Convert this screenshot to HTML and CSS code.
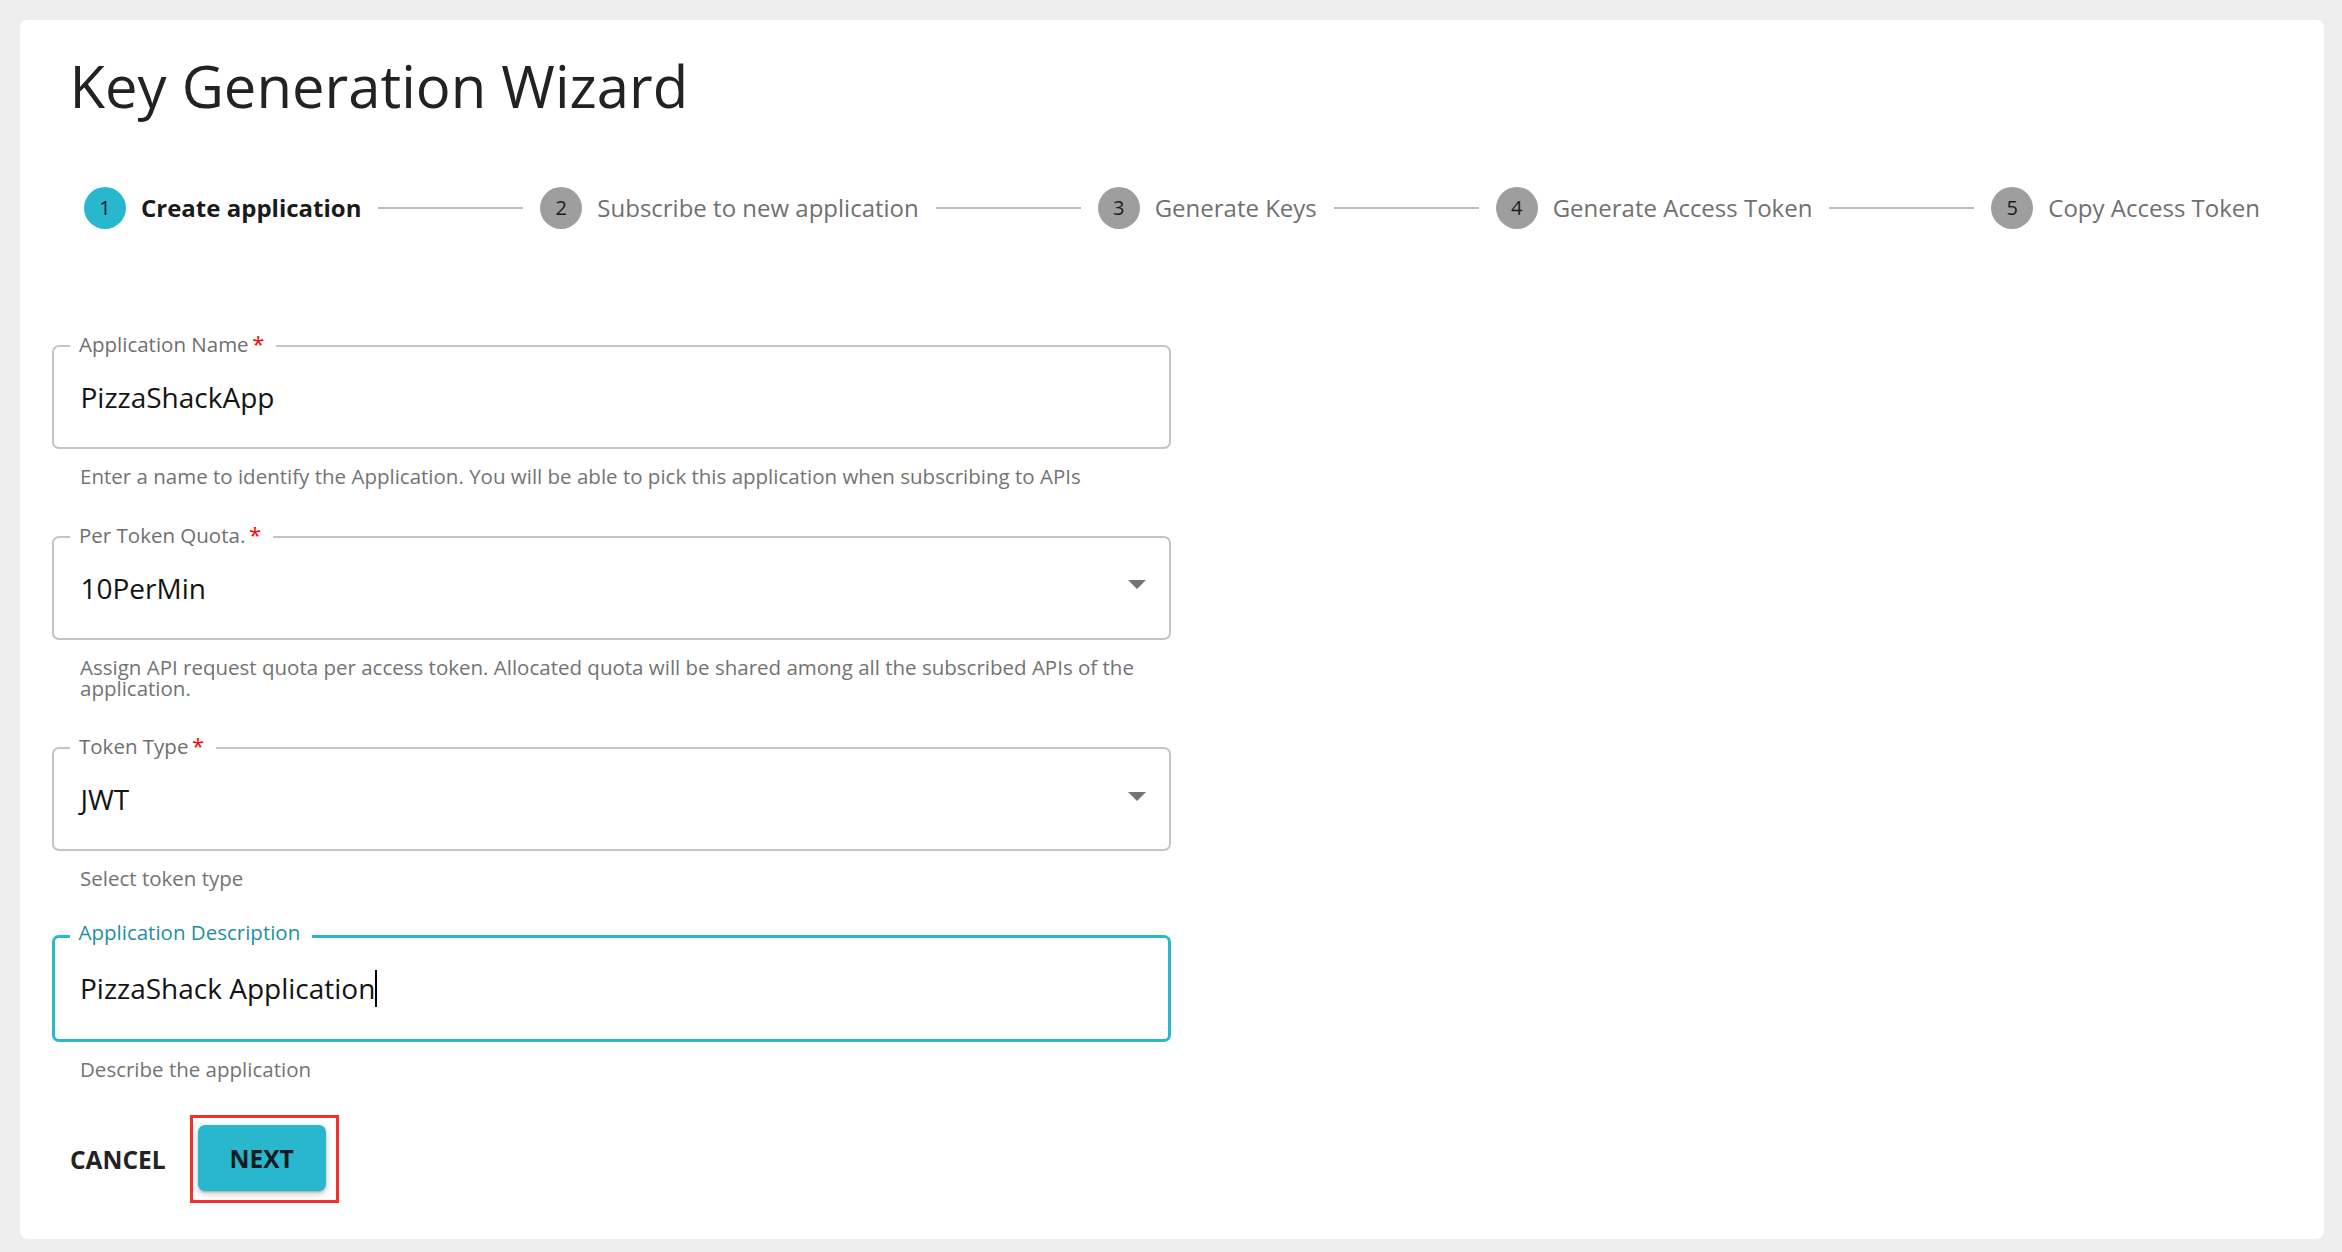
FILE: index.html
```html
<!DOCTYPE html>
<html lang="en">
<head>
<meta charset="utf-8">
<title>Key Generation Wizard</title>
<link rel="stylesheet" href="styles.css">
</head>
<body>
<div class="card">
  <h1 class="title">Key Generation Wizard</h1>
  <div class="stepper">
    <div class="step active"><span class="step-icon">1</span><span class="step-label">Create application</span></div>
    <div class="connector"></div>
    <div class="step"><span class="step-icon">2</span><span class="step-label">Subscribe to new application</span></div>
    <div class="connector"></div>
    <div class="step"><span class="step-icon">3</span><span class="step-label">Generate Keys</span></div>
    <div class="connector"></div>
    <div class="step"><span class="step-icon">4</span><span class="step-label">Generate Access Token</span></div>
    <div class="connector"></div>
    <div class="step"><span class="step-icon">5</span><span class="step-label">Copy Access Token</span></div>
  </div>

  <form class="form">
    <div class="field-group">
      <div class="field">
        <label class="field-label">Application Name<span class="req">&thinsp;*</span></label>
        <span class="field-value">PizzaShackApp</span>
      </div>
      <p class="helper">Enter a name to identify the Application. You will be able to pick this application when subscribing to APIs</p>
    </div>

    <div class="field-group">
      <div class="field select">
        <label class="field-label">Per Token Quota.<span class="req">&thinsp;*</span></label>
        <span class="field-value">10PerMin</span>
        <span class="arrow"></span>
      </div>
      <p class="helper">Assign API request quota per access token. Allocated quota will be shared among all the subscribed APIs of the application.</p>
    </div>

    <div class="field-group">
      <div class="field select">
        <label class="field-label">Token Type<span class="req">&thinsp;*</span></label>
        <span class="field-value">JWT</span>
        <span class="arrow"></span>
      </div>
      <p class="helper">Select token type</p>
    </div>

    <div class="field-group">
      <div class="field focused">
        <label class="field-label">Application Description</label>
        <span class="field-value">PizzaShack Application</span><span class="caret"></span>
      </div>
      <p class="helper">Describe the application</p>
    </div>

    <div class="actions">
      <button type="button" class="btn-text">CANCEL</button>
      <span class="highlight"><button type="button" class="btn-primary">NEXT</button></span>
    </div>
  </form>
</div>
</body>
</html>
```

FILE: styles.css
```css
html, body {
  margin: 0;
  padding: 0;
  height: 1252px;
  overflow: hidden;
  background: #eeeeee;
  font-family: "Open Sans", "Noto Sans", sans-serif;
}

.card {
  margin: 20px 18px 0 20px;
  height: 1219px;
  box-sizing: border-box;
  padding-top: 31px;
  background: #ffffff;
  border-radius: 8px;
}

.title {
  margin: 0;
  padding-left: 49.5px;
  font-size: 58px;
  font-weight: 400;
  line-height: 70px;
  color: #222222;
}

/* Stepper */
.stepper {
  margin-top: 66px;
  display: flex;
  align-items: center;
  column-gap: 17px;
  padding: 0 64px;
}

.step {
  display: flex;
  align-items: center;
  gap: 15px;
  flex: none;
}

.step-icon {
  width: 42px;
  height: 42px;
  border-radius: 50%;
  background: #9e9e9e;
  color: #1c1c1c;
  font-size: 20px;
  display: flex;
  align-items: center;
  justify-content: center;
  line-height: 1;
}

.step-label {
  font-size: 24px;
  line-height: 1;
  color: #707070;
  white-space: nowrap;
}

.step.active .step-icon {
  background: #28b7cc;
}

.step.active .step-label {
  color: #1a1a1a;
  font-weight: 700;
}

.connector {
  flex: 1 1 auto;
  border-top: 2px solid #bdbdbd;
}

/* Form */
.form {
  margin: 116px 0 0 32px;
  width: 1119px;
}

.field-group + .field-group {
  margin-top: 48.5px;
}

.field {
  position: relative;
  height: 104px;
  box-sizing: border-box;
  border: 2px solid #c4c4c4;
  border-radius: 7px;
  display: flex;
  align-items: center;
  padding: 0 23px 0 26.5px;
}

.field-label {
  position: absolute;
  top: -14px;
  left: 16px;
  padding: 0 12px 0 9px;
  background: #ffffff;
  font-size: 20.5px;
  line-height: 20px;
  color: #6f6f6f;
  white-space: nowrap;
}

.req {
  color: #ff0000;
  font-size: 22px;
}

.field-value {
  font-size: 28px;
  color: #141414;
}

.arrow {
  margin-left: auto;
  width: 0;
  height: 0;
  border-left: 9px solid transparent;
  border-right: 9px solid transparent;
  border-top: 9px solid #757575;
  margin-top: -6px;
}

.field.focused {
  border: 3.5px solid #28b7cc;
  padding-left: 25px;
  height: 107px;
  margin-top: -3px;
}

.field.focused .field-label {
  top: -15.5px;
  left: 14.5px;
  color: #1f8fa1;
}

.caret {
  display: inline-block;
  width: 1.5px;
  height: 37px;
  background: #000;
  margin-left: 0;
}

.helper {
  margin: 17px 24px 0 28px;
  font-size: 20.5px;
  line-height: 21px;
  color: #737373;
}

/* Actions */
.actions {
  margin-top: 35.5px;
  display: flex;
  align-items: center;
  gap: 24px;
  padding-left: 18px;
}

.btn-text {
  background: none;
  border: 0;
  padding: 0;
  font-family: "Open Sans", "Noto Sans", sans-serif;
  font-size: 24.5px;
  font-weight: 700;
  color: #222222;
  cursor: pointer;
}

.highlight {
  display: inline-flex;
  border: 3px solid #f2322a;
  padding: 7px 10px 9px 5px;
}

.btn-primary {
  width: 128px;
  height: 66px;
  border: 0;
  border-radius: 7px;
  background: #28b7cc;
  color: #0d1b24;
  font-family: "Open Sans", "Noto Sans", sans-serif;
  font-size: 24.5px;
  font-weight: 700;
  box-shadow: 0 2px 2px -1px rgba(0,0,0,0.2), 0 3px 5px rgba(0,0,0,0.14), 0 1px 9px rgba(0,0,0,0.12);
  cursor: pointer;
}
```
